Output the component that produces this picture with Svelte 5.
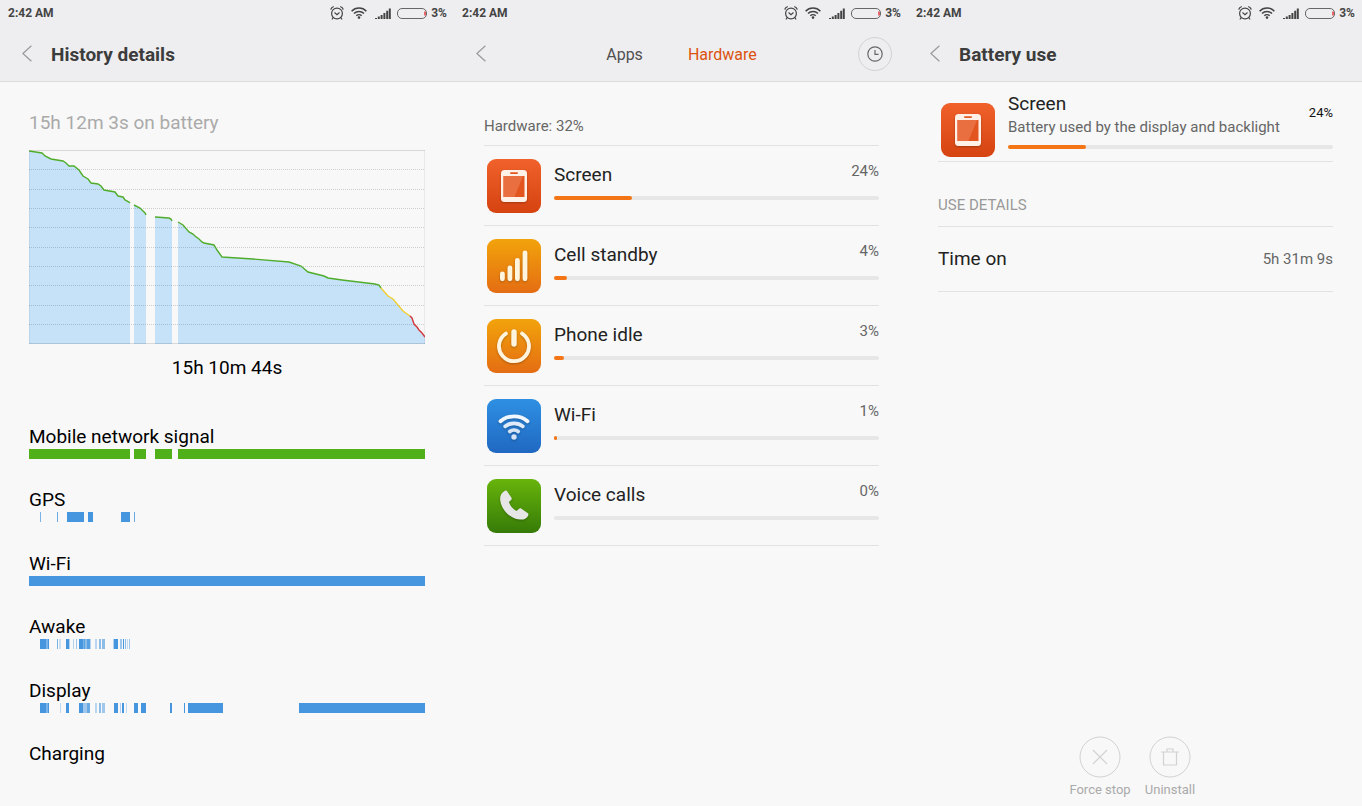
<script lang="ts">
  type Segment = [x: number, width: number, opacity?: number]

  interface Track {
    label: string
    color: string
    segments: Segment[]
  }

  interface Usage {
    name: string
    icon: string
    percent: number
  }

  const gridLines = [19, 39, 58, 77, 97, 116, 135, 155, 174]

  const batteryRuns = [
    '0,1 13,3 16,6 22,9 34,11 37,13 40,16 45,16 50,20 54,26 59,29 62,33 69,34 72,36 75,40 86,42 89,46 94,47 96,50 100,52 101,53',
    '105,55 111,58 116,63 117,65',
    '126,67 140,68 142,69 143,71',
    '149,72 154,75 160,82 164,84 166,86 170,89 173,92 175,93 185,95 188,100 193,107 224,109 260,112 272,116 279,122 295,126 299,128 313,130 346,134 350,135 352,138',
  ]
  const yellowRun = '352,138 359,146 364,149 374,161 381,166'
  const redRun = '381,166 383,168 385,174 388,177 390,180 393,183 396,187'

  const areas = batteryRuns.map((run, i) => {
    const last = i === batteryRuns.length - 1
    const points = last ? `${run} ${yellowRun} ${redRun}` : run
    const start = points.split(',')[0]
    const end = points.split(' ').at(-1)!.split(',')[0]
    return `${start},194 ${points} ${end},194`
  })

  const tracks: Track[] = [
    { label: 'Mobile network signal', color: '#4fb01a', segments: [[0, 101], [105, 12], [126, 17], [149, 247]] },
    { label: 'GPS', color: '#4596df', segments: [[11, 1, 0.7], [28, 1, 0.8], [38, 17], [59, 5], [92, 9], [105, 1, 0.8]] },
    { label: 'Wi-Fi', color: '#4596df', segments: [[0, 396]] },
    {
      label: 'Awake',
      color: '#4596df',
      segments: [
        [11, 6], [17, 2, 0.7], [19, 1], [28, 1, 0.7], [30, 2, 0.25], [37, 3], [40, 1, 0.4], [44, 1, 0.4], [47, 1, 0.5],
        [50, 4], [54, 1, 0.7], [55, 1, 0.9], [56, 2, 0.6], [58, 3, 0.9], [61, 1, 0.4], [66, 2, 0.35], [70, 2, 0.6],
        [73, 3, 0.6], [84, 1, 0.4], [85, 4], [91, 2, 0.5], [94, 1], [96, 1, 0.6], [98, 1, 0.3], [100, 1, 0.5],
      ],
    },
    {
      label: 'Display',
      color: '#4596df',
      segments: [
        [11, 6], [17, 2, 0.7], [19, 1], [31, 1, 0.3], [37, 3], [50, 4], [54, 4, 0.5], [58, 3, 0.8], [66, 2, 0.35],
        [70, 2, 0.6], [73, 3, 0.5], [85, 4], [91, 1, 0.4], [93, 2], [97, 1, 0.3], [105, 4], [112, 5], [141, 2],
        [155, 1], [159, 35], [270, 126],
      ],
    },
    { label: 'Charging', color: '#4596df', segments: [] },
  ]

  const hardware: Usage[] = [
    { name: 'Screen', icon: 'screen', percent: 24 },
    { name: 'Cell standby', icon: 'cell', percent: 4 },
    { name: 'Phone idle', icon: 'idle', percent: 3 },
    { name: 'Wi-Fi', icon: 'wifi', percent: 1 },
    { name: 'Voice calls', icon: 'calls', percent: 0 },
  ]
</script>

{#snippet statusBar()}
  <div class="status">
    <span>2:42 AM</span>
    <div class="status-icons">
      <svg width="14" height="14" viewBox="0 0 14 14" fill="none" stroke="#444" stroke-width="1.2" stroke-linecap="round">
        <circle cx="7" cy="7.5" r="5.4" />
        <path d="M4.8 6.8 7 8.6 9.2 6.8M.9 3.2C1.3 2 2.2 1.2 3.4.8M13.1 3.2C12.7 2 11.8 1.2 10.6.8M3.2 11.6 2.2 13M10.8 11.6l1 1.4" />
      </svg>
      <svg class="wireless" width="16" height="12" viewBox="0 0 16 12" fill="none" stroke="#444" stroke-width="1.5">
        <path d="M.6 4.2C4.6-.1 11.4-.1 15.4 4.2M3 6.6c2.7-2.8 7.3-2.8 10 0M5.3 8.8c1.5-1.5 3.9-1.5 5.4 0" />
        <circle cx="8" cy="10.6" r="1.3" fill="#444" stroke="none" />
      </svg>
      <svg class="signal" width="16" height="11" viewBox="0 0 16 11" fill="#444">
        <path d="M0 10h2v1H0zM2.8 8.6h2V11h-2zM5.6 7h2v4h-2zM8.4 5h2v6h-2zM11.2 2.8h2V11h-2zM13.8.4h2V11h-2z" />
      </svg>
      <svg class="battery" width="30" height="11" viewBox="0 0 30 11" fill="none">
        <rect x=".5" y=".5" width="29" height="10" rx="4.5" stroke="#666" />
        <path d="M28 3.5v4" stroke="#e0474d" stroke-width="1.6" />
      </svg>
      <span>3%</span>
    </div>
  </div>
{/snippet}

{#snippet backButton()}
  <button class="back" aria-label="Back">
    <svg width="10" height="17" viewBox="0 0 10 17" fill="none" stroke="#999" stroke-width="1.2">
      <path d="M9.4.7.9 8.5l8.5 7.8" />
    </svg>
  </button>
{/snippet}

{#snippet appIcon(kind: string)}
  <div class="app-icon {kind}">
    <svg width="54" height="54" viewBox="0 0 54 54" fill="none">
      {#if kind === 'screen'}
        <rect x="14" y="11" width="26" height="32" rx="3.5" fill="#fff1e8" />
        <rect x="23" y="13.3" width="8" height="1.6" rx=".8" fill="#e2571e" />
        <path d="M16.5 17h21v21h-21z" fill="#e2551e" />
        <path d="M16.5 17h19.5l-8.5 21h-11z" fill="#e96f41" />
      {:else if kind === 'cell'}
        <path d="M15.4 34.8v5M22.9 28.8v11M30.4 21.3v18.5M38 13.8v26" stroke="#fff5df" stroke-width="4.8" stroke-linecap="round" />
      {:else if kind === 'idle'}
        <path d="M18.9 14.6a15 15 0 1 0 16.2 0" stroke="#fff5df" stroke-width="3.8" stroke-linecap="round" />
        <path d="M27 13v12" stroke="#fff5df" stroke-width="5.4" stroke-linecap="round" />
      {:else if kind === 'wifi'}
        <g stroke="#f1f7ff" stroke-width="3.8" stroke-linecap="round">
          <path d="M13.5 22.2c7.3-6.4 19.7-6.4 27 0" />
          <path d="M18.2 27.4c4.8-4 12.8-4 17.6 0" stroke="#e0ebf9" />
          <path d="M22.8 32.4c2.3-1.8 6.1-1.8 8.4 0" stroke="#d5e3f5" />
        </g>
        <circle cx="27" cy="38" r="2.7" fill="#d5e3f5" />
      {:else}
        <path d="M18 11.7c-3.5 1.7-5.2 5-4.8 9.2 1.2 10.3 10.2 19.3 20.3 19.7 3.9.1 6.9-1.6 7.9-4.7.2-.8 0-1.5-.8-2l-6.2-4.2c-.8-.6-1.8-.5-2.6.2l-2.2 2.1c-3.8-1.7-6.6-5-7.7-8.9l2-1.8c.8-.7 1-1.5.6-2.5l-4.2-6.4c-.6-.9-1.4-1.1-2.3-.7z" fill="#e6e6e6" />
      {/if}
    </svg>
  </div>
{/snippet}

{#snippet meter(percent: number)}
  <div class="meter">
    <div class="meter-fill" style="width: {percent}%"></div>
  </div>
{/snippet}

<div class="screens">
  <section class="pane history">
    <header>
      {@render statusBar()}
      <div class="titlebar">
        {@render backButton()}
        <h1>History details</h1>
      </div>
    </header>
    <div class="content">
      <p class="since">15h 12m 3s on battery</p>
      <svg class="chart" viewBox="0 0 396 194" preserveAspectRatio="none" role="img" aria-label="Battery level">
        {#each areas as points}
          <polygon {points} fill="#c6e2f8" />
        {/each}
        {#each gridLines as y}
          <path d="M0 {y}.5h396" stroke="#000" stroke-opacity=".17" stroke-dasharray="1 1" />
        {/each}
        <path d="M0 .5h396M0 193.5h396" stroke="#000" stroke-opacity=".13" />
        <path d="M395.5 0v194M.5 0v194" stroke="#000" stroke-opacity=".06" />
        <g fill="none" stroke-width="1.4">
          {#each batteryRuns as points}
            <polyline {points} stroke="#50ad2b" />
          {/each}
          <polyline points={yellowRun} stroke="#efcf35" />
          <polyline points={redRun} stroke="#d4393c" />
        </g>
      </svg>
      <p class="duration">15h 10m 44s</p>
      <ul class="tracks">
        {#each tracks as track}
          <li>
            <span>{track.label}</span>
            <svg viewBox="0 0 396 10" preserveAspectRatio="none" fill={track.color}>
              {#each track.segments as [x, width, opacity = 1]}
                <rect {x} y="0" {width} height="10" {opacity} />
              {/each}
            </svg>
          </li>
        {/each}
      </ul>
    </div>
  </section>

  <section class="pane">
    <header>
      {@render statusBar()}
      <div class="titlebar">
        {@render backButton()}
        <nav>
          <button class="tab">Apps</button>
          <button class="tab active">Hardware</button>
        </nav>
        <button class="clock" aria-label="History">
          <svg width="16" height="16" viewBox="0 0 16 16" fill="none" stroke="#666" stroke-width="1.2">
            <circle cx="8" cy="8" r="7.2" />
            <path d="M8 4v4.4h3.6" />
          </svg>
        </button>
      </div>
    </header>
    <div class="content">
      <p class="total">Hardware: 32%</p>
      <ul class="usage-list">
        {#each hardware as item}
          <li>
            {@render appIcon(item.icon)}
            <div class="usage">
              <div class="usage-head">
                <span class="name">{item.name}</span>
                <span class="percent">{item.percent}%</span>
              </div>
              {@render meter(item.percent)}
            </div>
          </li>
        {/each}
      </ul>
    </div>
  </section>

  <section class="pane">
    <header>
      {@render statusBar()}
      <div class="titlebar">
        {@render backButton()}
        <h1>Battery use</h1>
      </div>
    </header>
    <div class="content">
      <div class="summary">
        {@render appIcon('screen')}
        <div class="usage">
          <div class="summary-head">
            <div>
              <h2>Screen</h2>
              <p>Battery used by the display and backlight</p>
            </div>
            <span>24%</span>
          </div>
          {@render meter(24)}
        </div>
      </div>
      <h3>USE DETAILS</h3>
      <dl>
        <dt>Time on</dt>
        <dd>5h 31m 9s</dd>
      </dl>
    </div>
    <footer>
      <button disabled>
        <svg width="42" height="42" viewBox="0 0 42 42" fill="none" stroke="#d2d2d2">
          <circle cx="21" cy="21" r="20" />
          <path d="m14 14 14 14M28 14 14 28" stroke-width="1.2" />
        </svg>
        Force stop
      </button>
      <button disabled>
        <svg width="42" height="42" viewBox="0 0 42 42" fill="none" stroke="#d2d2d2">
          <circle cx="21" cy="21" r="20" />
          <path d="M12 16h18M14.5 16v13h13V16M18 16v-3h6v3" stroke-width="1.2" />
        </svg>
        Uninstall
      </button>
    </footer>
  </section>
</div>

<style>
  :global(body) {
    margin: 0;
    background: #f8f8f8;
  }
  .screens {
    display: flex;
    min-height: 100vh;
    font-family: Roboto, sans-serif;
    color: #111;
  }
  .pane {
    flex: 1;
    min-width: 0;
    display: flex;
    flex-direction: column;
    background: #f8f8f8;
  }
  h1, h2, h3, p, ul, dl, dd {
    margin: 0;
    padding: 0;
    font-weight: 400;
  }
  ul {
    list-style: none;
  }
  svg {
    display: block;
    flex-shrink: 0;
  }
  button {
    padding: 0;
    border: none;
    background: none;
    font: inherit;
    color: inherit;
    cursor: pointer;
  }
  header {
    background: #eeeef0;
    border-bottom: 1px solid #dcdcdc;
  }
  .status {
    display: flex;
    align-items: center;
    justify-content: space-between;
    height: 26px;
    padding: 0 7px 0 8px;
    font-size: 12px;
    font-weight: 700;
    color: #444;
  }
  .status-icons {
    display: flex;
    align-items: center;
  }
  .wireless {
    margin-left: 7px;
  }
  .signal {
    margin-left: 8px;
  }
  .battery {
    margin: 0 4px 0 6px;
  }
  .titlebar {
    display: flex;
    align-items: center;
    height: 55px;
    padding: 0 16px 0 22px;
  }
  .back {
    width: 29px;
  }
  h1 {
    padding-top: 2px;
    font-size: 19px;
    line-height: 24px;
    font-weight: 700;
    color: #3c3c3c;
  }
  nav {
    flex: 1;
    display: flex;
    justify-content: center;
    gap: 45px;
    padding-top: 2px;
  }
  .tab {
    font-size: 16px;
    line-height: 24px;
    color: #505050;
  }
  .tab.active {
    color: #dc5310;
  }
  .clock {
    display: flex;
    align-items: center;
    justify-content: center;
    width: 34px;
    height: 34px;
    box-sizing: border-box;
    border: 1px solid #d2d2d2;
    border-radius: 50%;
  }
  .content {
    flex: 1;
    display: flex;
    flex-direction: column;
    padding: 0 29px 0 30px;
  }

  .history .content {
    padding: 29px 29px 30px;
    color: #000;
  }
  .since {
    font-size: 19px;
    line-height: 24px;
    color: #aaa;
  }
  .chart {
    width: 100%;
    height: 194px;
    margin-top: 15px;
  }
  .duration {
    margin-top: 12px;
    font-size: 19px;
    line-height: 24px;
    text-align: center;
  }
  .tracks {
    flex: 1;
    display: flex;
    flex-direction: column;
    justify-content: space-between;
    margin-top: 45px;
    font-size: 19px;
    line-height: 24px;
  }
  .tracks span {
    display: block;
  }
  .tracks svg {
    width: 100%;
    height: 10px;
  }

  .total {
    padding: 32px 0 7px;
    font-size: 15px;
    line-height: 24px;
    color: #666;
  }
  .usage-list {
    border-top: 1px solid #e2e2e2;
  }
  .usage-list li {
    display: flex;
    align-items: center;
    gap: 13px;
    height: 79px;
    padding-left: 3px;
    border-bottom: 1px solid #e2e2e2;
  }
  .usage {
    flex: 1;
    min-width: 0;
    padding-bottom: 8px;
  }
  .usage-head {
    display: flex;
    justify-content: space-between;
    margin-bottom: 9px;
  }
  .name, h2, dt {
    font-size: 19px;
    line-height: 24px;
    color: #222;
  }
  .percent {
    font-size: 15px;
    line-height: 16px;
    color: #666;
  }
  .meter {
    height: 4px;
    border-radius: 2px;
    background: #e7e7e7;
  }
  .meter-fill {
    height: 100%;
    border-radius: 2px;
    background: #f47516;
  }
  .app-icon {
    width: 54px;
    height: 54px;
    border-radius: 9px;
    overflow: hidden;
  }
  .app-icon svg {
    filter: drop-shadow(0 1px 1px rgba(0, 0, 0, 0.25));
  }
  .screen {
    background: linear-gradient(#f0612b, #d54410);
  }
  .cell, .idle {
    background: linear-gradient(#f2a30b, #e46d13);
  }
  .wifi {
    background: linear-gradient(#2e90e2, #2068c2);
  }
  .calls {
    background: linear-gradient(#68b40b, #367b08);
  }

  .summary {
    display: flex;
    align-items: flex-end;
    gap: 13px;
    padding: 10px 0 4px 3px;
    border-bottom: 1px solid #e2e2e2;
  }
  .summary-head {
    display: flex;
    justify-content: space-between;
    margin-bottom: 7px;
  }
  .summary-head p {
    font-size: 15px;
    line-height: 22px;
    color: #666;
  }
  .summary-head > span {
    padding-top: 13px;
    font-size: 13px;
    line-height: 16px;
  }
  h3 {
    padding: 31px 0 9px;
    border-bottom: 1px solid #e2e2e2;
    font-size: 15px;
    line-height: 24px;
    color: #999;
  }
  dl {
    display: flex;
    align-items: center;
    justify-content: space-between;
    height: 64px;
    border-bottom: 1px solid #e2e2e2;
  }
  dd {
    font-size: 15px;
    color: #666;
  }
  footer {
    display: flex;
    justify-content: center;
    padding-bottom: 8px;
  }
  footer button {
    display: flex;
    flex-direction: column;
    align-items: center;
    gap: 4px;
    width: 70px;
    font-size: 13px;
    line-height: 16px;
    white-space: nowrap;
    color: #aaa;
    cursor: default;
  }
</style>
